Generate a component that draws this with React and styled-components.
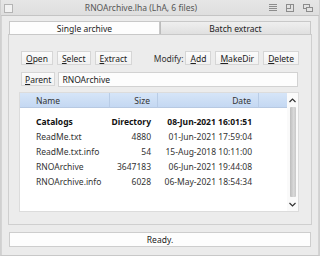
import React from "react";
import styled, { createGlobalStyle } from "styled-components";

const Global = createGlobalStyle`
  html, body { margin: 0; padding: 0; background: #e9e9e9; }
  body { font-family: "Noto Sans", "DejaVu Sans", sans-serif; font-size: 8px; color: #333; }
  * { box-sizing: border-box; }
`;

const Window = styled.div`
  width: 320px;
  height: 256px;
  background: #ebebeb;
  display: flex;
  flex-direction: column;
  border-left: 1px solid #d0d0d0;
  border-right: 1px solid #d0d0d0;
  border-bottom: 1px solid #c8c8c8;
  overflow: hidden;
`;

const TitleBar = styled.div`
  height: 16px;
  flex: none;
  display: flex;
  align-items: center;
  padding: 0 6px 0 3px;
  background: linear-gradient(#e6e6e6, #dedede);
  border-bottom: 1px solid #c4c4c4;
`;

const CloseBox = styled.div`
  width: 9px;
  height: 9px;
  border: 1px solid #b4b4b4;
  background: #f2f2f2;
  margin-top: 1px;
`;

const Title = styled.div`
  flex: 1;
  text-align: center;
  color: #555;
  font-size: 8.5px;
`;

const TitleIcons = styled.div`
  display: flex;
  align-items: center;
  gap: 9px;
  color: #8a8a8a;
`;

const Body = styled.div`
  flex: 1;
  display: flex;
  flex-direction: column;
  padding: 5px 6px 0 6px;
  border-left: 1px solid #d4d4d4;
  border-right: 1px solid #d4d4d4;
`;

const Tabs = styled.div`
  display: flex;
  height: 13px;
  flex: none;
  margin: 0 1px;
`;

const Tab = styled.div`
  flex: 1;
  display: flex;
  align-items: center;
  justify-content: center;
  font-size: 8.5px;
  color: #222;
  border: 1px solid #c8c8c8;
  border-bottom: none;
  background: ${(p) => (p.$active ? "#fdfdfd" : "linear-gradient(#efefef, #e0e0e0)")};
  & + & { border-left: 1px solid #bcbcbc; }
`;

const Panel = styled.div`
  height: 191px;
  flex: none;
  border: 1px solid #cfcfcf;
  border-top: 1px solid #c8c8c8;
  background: #ececec;
  padding: 16px 12px 0 12px;
  display: flex;
  flex-direction: column;
`;

const ButtonRow = styled.div`
  display: flex;
  align-items: center;
  height: 14px;
  gap: 4px;
`;

const Spacer = styled.div`
  flex: 1;
`;

const Button = styled.div`
  height: 14px;
  padding: 0 ${(p) => p.$pad || 4}px;
  display: flex;
  align-items: center;
  background: linear-gradient(#fbfbfb, #f1f1f1);
  border: 1px solid #d6d6d6;
  color: #222;
  font-size: 8.5px;
  white-space: nowrap;
  u { text-decoration: underline; text-underline-offset: 1px; }
`;

const Label = styled.div`
  color: #333;
  font-size: 8.5px;
  margin-right: -2px;
`;

const PathRow = styled.div`
  display: flex;
  gap: 3px;
  margin-top: 7px;
  height: 15px;
`;

const TextField = styled.div`
  flex: 1;
  background: #fdfdfd;
  border: 1px solid #d2d2d2;
  display: flex;
  align-items: center;
  padding-left: 3px;
  font-size: 8.5px;
  color: #222;
  margin-right: 1px;
`;

const List = styled.div`
  margin: 5px 0 0 -2px;
  height: 120px;
  display: flex;
  background: #fff;
  border: 1px solid #dcdcdc;
`;

const ListMain = styled.div`
  flex: 1;
  display: flex;
  flex-direction: column;
`;

const Grid = styled.div`
  display: grid;
  grid-template-columns: 90px 48px 101px 1fr;
`;

const HeaderCell = styled.div`
  height: 15px;
  display: flex;
  align-items: center;
  justify-content: ${(p) => (p.$right ? "flex-end" : "flex-start")};
  padding: ${(p) => (p.$right ? "0 7px 0 0" : "0 0 0 16px")};
  background: linear-gradient(#d6e5f8, #c4d8f2);
  border-right: ${(p) => (p.$last ? "none" : "1px solid #b8cce6")};
  border-bottom: 1px solid #b7c9e2;
  font-size: 8.5px;
  color: #333;
`;

const Rows = styled.div`
  padding-top: 6px;
`;

const Cell = styled.div`
  height: 15px;
  display: flex;
  align-items: center;
  justify-content: ${(p) => (p.$right ? "flex-end" : "flex-start")};
  padding: ${(p) => (p.$right ? "0 7px 0 0" : "0 0 0 16px")};
  font-size: 8.5px;
  font-weight: ${(p) => (p.$bold ? 700 : 400)};
  color: ${(p) => (p.$bold ? "#111" : "#333")};
  white-space: nowrap;
`;

const Scrollbar = styled.div`
  width: 11px;
  display: flex;
  flex-direction: column;
  align-items: center;
  background: #fafafa;
`;

const Arrow = styled.div`
  height: 14px;
  display: flex;
  align-items: center;
  justify-content: center;
  color: #333;
`;

const Track = styled.div`
  flex: 1;
  width: 6px;
  border-radius: 1px;
  background: linear-gradient(90deg, #bdbdbd, #d9d9d9 60%, #c8c8c8);
`;

const StatusBar = styled.div`
  margin: 7px 1px 0 1px;
  height: 15px;
  flex: none;
  background: #fdfdfd;
  border: 1px solid #cdcdcd;
  display: flex;
  align-items: center;
  justify-content: center;
  font-size: 8.5px;
  color: #222;
`;

const rows = [
  ["Catalogs", "Directory", "08-Jun-2021 16:01:51", true],
  ["ReadMe.txt", "4880", "01-Jun-2021 17:59:04"],
  ["ReadMe.txt.info", "54", "15-Aug-2018 10:11:00"],
  ["RNOArchive", "3647183", "06-Jun-2021 19:44:08"],
  ["RNOArchive.info", "6028", "06-May-2021 18:54:34"],
];

const U = ({ k, rest }) => (
  <>
    <u>{k}</u>
    {rest}
  </>
);

export default function App() {
  return (
    <>
      <Global />
      <Window>
        <TitleBar>
          <CloseBox />
          <Title>RNOArchive.lha (LhA, 6 files)</Title>
          <TitleIcons>
            <svg width="8" height="8" viewBox="0 0 8 8">
              <path d="M0 0.5H8M0 2.5H8M0 4.5H8M0 6.5H8" stroke="#8c8c8c" strokeWidth="1" />
            </svg>
            <svg width="8" height="8" viewBox="0 0 8 8">
              <rect x="0.5" y="0.5" width="7" height="7" fill="none" stroke="#8c8c8c" />
              <rect x="0.5" y="0.5" width="4" height="4" fill="none" stroke="#8c8c8c" />
            </svg>
            <svg width="10" height="8" viewBox="0 0 10 8">
              <rect x="0.5" y="0.5" width="6" height="4" fill="none" stroke="#8c8c8c" />
              <rect x="3.5" y="3.5" width="6" height="4" fill="#e2e2e2" stroke="#8c8c8c" />
            </svg>
          </TitleIcons>
        </TitleBar>
        <Body>
          <Tabs>
            <Tab $active>Single archive</Tab>
            <Tab>Batch extract</Tab>
          </Tabs>
          <Panel>
            <ButtonRow>
              <Button><U k="O" rest="pen" /></Button>
              <Button><U k="S" rest="elect" /></Button>
              <Button><U k="E" rest="xtract" /></Button>
              <Spacer />
              <Label>Modify:</Label>
              <Button $pad={4}><U k="A" rest="dd" /></Button>
              <Button $pad={4}><U k="M" rest="akeDir" /></Button>
              <Button $pad={4}><U k="D" rest="elete" /></Button>
            </ButtonRow>
            <PathRow>
              <Button $pad={3}><U k="P" rest="arent" /></Button>
              <TextField>RNOArchive</TextField>
            </PathRow>
            <List>
              <ListMain>
                <Grid>
                  <HeaderCell>Name</HeaderCell>
                  <HeaderCell $right>Size</HeaderCell>
                  <HeaderCell $right>Date</HeaderCell>
                  <HeaderCell $last />
                </Grid>
                <Rows>
                  <Grid>
                    {rows.map(([n, s, d, b]) => (
                      <React.Fragment key={n}>
                        <Cell $bold={b}>{n}</Cell>
                        <Cell $right $bold={b}>{s}</Cell>
                        <Cell $right $bold={b}>{d}</Cell>
                        <Cell />
                      </React.Fragment>
                    ))}
                  </Grid>
                </Rows>
              </ListMain>
              <Scrollbar>
                <Arrow>
                  <svg width="7" height="5" viewBox="0 0 7 5">
                    <path d="M0.5 4L3.5 1L6.5 4" fill="none" stroke="#333" strokeWidth="1.2" />
                  </svg>
                </Arrow>
                <Track />
                <Arrow>
                  <svg width="7" height="5" viewBox="0 0 7 5">
                    <path d="M0.5 1L3.5 4L6.5 1" fill="none" stroke="#333" strokeWidth="1.2" />
                  </svg>
                </Arrow>
              </Scrollbar>
            </List>
          </Panel>
          <StatusBar>Ready.</StatusBar>
        </Body>
      </Window>
    </>
  );
}
